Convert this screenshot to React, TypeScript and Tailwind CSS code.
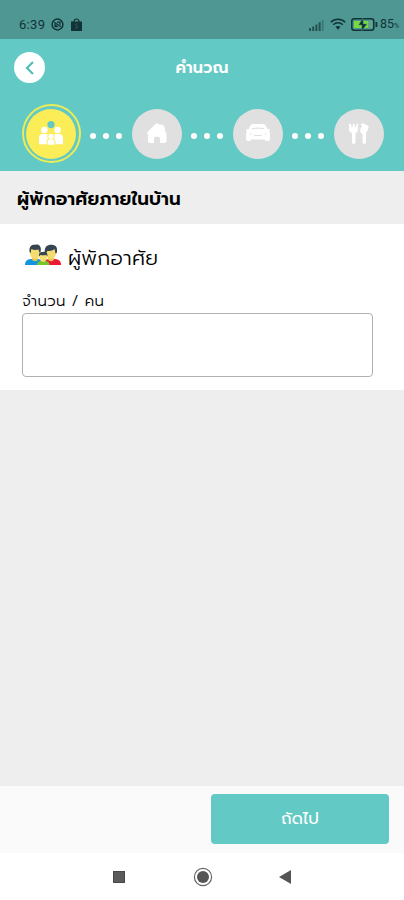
import React from "react";

const Dots = () => (
  <div className="flex w-[51px] justify-center gap-[7px] pt-[4px]">
    <span className="h-[6px] w-[6px] rounded-full bg-white" />
    <span className="h-[6px] w-[6px] rounded-full bg-white" />
    <span className="h-[6px] w-[6px] rounded-full bg-white" />
  </div>
);

const Step = ({ children }: { children: React.ReactNode }) => (
  <div className="flex h-[50px] w-[50px] items-center justify-center rounded-full bg-[#e0e0e0]">
    {children}
  </div>
);

const StatusBar = () => (
  <div className="flex h-[39px] items-end justify-between bg-[#4e9792] pb-[6px] pl-[19px] text-[#123336]">
    <div className="flex h-[17px] items-center">
      <span className="w-[32px] font-[Roboto] text-[13px] tracking-[0.3px]">6:39</span>
      <svg width="13" height="13" viewBox="0 0 13 13" fill="none" stroke="currentColor">
        <circle cx="6.5" cy="6.5" r="5.4" strokeWidth="1.5" />
        <path d="M3.2 4.2 9.8 8.8M4 8.7V6.8l2 1.9H4M6 4.2h3v2.6" strokeWidth="1.3" />
      </svg>
      <svg className="ml-[7px]" width="11" height="13" viewBox="0 0 11 13">
        <path d="M3 4C3 0 8 0 8 4" fill="none" stroke="currentColor" strokeWidth="1.2" />
        <path d="M0 3.5h11V13H0z" fill="currentColor" />
        <path d="M6.8 6.2c-3-1-3 1.2-1.2 1.8 2.3.7 1 3-1.6 1.7" fill="none" stroke="#2c5c5b" />
      </svg>
    </div>
    <div className="flex h-[17px] items-center overflow-hidden pr-[4px]">
      <svg width="15" height="12" viewBox="0 0 15 12" fill="#245250">
        <path d="M0 9h2v3H0zM3.2 7.5h2V12h-2zM6.4 5.5h2V12h-2zM9.6 3.2h2V12h-2z" />
        <path d="M12.8 1h1.8v11h-1.8z" opacity=".45" />
      </svg>
      <svg className="ml-[6px]" width="16" height="13" viewBox="0 0 16 13" fill="none" stroke="currentColor">
        <path d="M.8 4.2C4.8.2 11.2.2 15.2 4.2" strokeWidth="1.4" />
        <path d="M3.2 6.8c2.7-2.6 6.9-2.6 9.6 0" strokeWidth="1.5" />
        <path d="m5.5 8.8 2.5 3 2.5-3c-1.4-1.2-3.6-1.2-5 0Z" fill="currentColor" stroke="none" />
      </svg>
      <svg className="ml-[5px]" width="27" height="13" viewBox="0 0 27 13">
        <rect x=".8" y=".8" width="22" height="11.4" rx="2.5" fill="none" stroke="currentColor" strokeWidth="1.5" />
        <path d="M3 3h14v7H3z" fill="#79d83b" />
        <path d="M17 3h4v7h-4z" fill="#64a58a" />
        <path d="M11.8.2 7.6 7h3.2v5.8L16 5.9h-3.6z" fill="currentColor" stroke="#4e9792" strokeWidth=".5" />
        <path d="M24.5 4h1.8v5h-1.8z" fill="currentColor" />
      </svg>
      <span className="ml-[2px] font-[Roboto] text-[12.5px]">85</span>
      <span className="w-[6px] pt-[4px] font-[Roboto] text-[7px]">%</span>
    </div>
  </div>
);

const FamilyIcon = () => (
  <svg width="24" height="25" viewBox="0 0 24 25" fill="#fff">
    <circle cx="12" cy="3.6" r="3.6" fill="#62c9c5" />
    <circle cx="5.4" cy="9" r="3.2" />
    <circle cx="18.6" cy="9" r="3.2" />
    <path d="M0 16.5C0 14 1.5 13 4 13h3c1 0 1.5.4 1.7 1-.8 1.5-.3 3 .6 3.8-1.2.6-1.8 1.6-1.8 3.2v2.2H0zM24 16.5c0-2.5-1.5-3.5-4-3.5h-3c-1 0-1.5.4-1.7 1 .8 1.5.3 3-.6 3.8 1.2.6 1.8 1.6 1.8 3.2v2.2H24z" />
    <circle cx="12" cy="15.3" r="2.6" />
    <path d="M8.5 21c0-2 1-2.8 2.4-2.8h2.2c1.4 0 2.4.8 2.4 2.8v2.8h-7z" />
  </svg>
);

const PeopleIcon = () => (
  <svg width="36" height="22" viewBox="0 0 36 22">
    <path d="M0 21c0-4 2-5.5 6-6h7c4 .5 5 3 5 6z" fill="#1494dc" />
    <path d="M18 21c0-4 2-5.5 6-6h6c4 .5 6 2 6 6z" fill="#ed1834" />
    <path d="M7 13h6v2.5c-1 2.2-5 2.2-6 0zM23 13h6v2.5c-1 2.2-5 2.2-6 0z" fill="#e7c64f" />
    <ellipse cx="10" cy="9" rx="5" ry="6" fill="#f6dc70" />
    <ellipse cx="26" cy="9" rx="5" ry="6" fill="#f6dc70" />
    <path d="M4.5 8C4 3 6 .5 10 .8c4-1.3 7 2 5.5 7.2l-1.2.5-.8-3c-3 .8-5.5.3-7.2-.5L5.7 9z" fill="#354652" />
    <path d="M20 9C18.8 4 22 .3 26 .8 31 .3 33 4 31.8 9l-1.3.5-1-4.5c-2.5 2-5 2-7.2 2L21 10z" fill="#354652" />
    <path d="M12 21c0-2.5 2-4 4-4h4.5c2.5 0 4 1.5 4 4z" fill="#78c52b" />
    <ellipse cx="18.2" cy="13.2" rx="3.8" ry="4.8" fill="#f6dc70" />
    <path d="M14 12.5C13.5 9 15 7.5 18 8c3-.7 5 1.2 4.3 4.5l-1-1.5c-2.5.6-4.5.3-6 0z" fill="#354652" />
  </svg>
);

export default function App() {
  return (
    <div className="flex h-[900px] w-[404px] flex-col overflow-hidden bg-[#eeeeee] font-['Prompt','Kanit','Noto_Sans_Thai','Noto_Sans',sans-serif]">
      <StatusBar />

      {/* Header */}
      <header className="h-[132px] bg-[#62c9c5]">
        <div className="flex items-center px-[14px] pt-[13px]">
          <button className="flex h-[31px] w-[31px] items-center justify-center rounded-full bg-white">
            <svg width="10" height="14" viewBox="0 0 10 14" fill="none" stroke="#56bdb8" strokeWidth="2.3">
              <path d="M8 1 2 7l6 6" />
            </svg>
          </button>
          <h1 className="flex-1 pt-[2px] pr-[31px] text-center text-[16px] leading-[29px] font-semibold tracking-[0.2px] text-white">คำนวณ</h1>
        </div>

        {/* Steps */}
        <div className="mt-[21px] flex h-[59px] items-center pl-[21.5px]">
          <div className="flex h-[59px] w-[59px] items-center justify-center rounded-full border-2 border-[#eced56]">
            <div className="flex h-[50px] w-[50px] items-center justify-center rounded-full bg-[#faed57]">
              <FamilyIcon />
            </div>
          </div>
          <Dots />
          <Step>
            <svg className="mb-[2px]" width="20" height="20" viewBox="0 0 20 20" fill="#fff">
              <path d="M0 9.5 8.5 1q1.5-1.4 3 0l1 .8Q15 .8 16.5 2.5L18 5v3l1.5 2.5V18q0 2-2 2H13v-4.5q0-2-3-2t-3 2V20H3q-2 0-2-2v-6.5z" />
            </svg>
          </Step>
          <Dots />
          <Step>
            <svg className="mb-[2px]" width="24" height="17" viewBox="0 0 24 17" fill="#fff">
              <path d="M7 0h10q2 0 2.8 1.7L21.5 5H23q1 0 1 1l-1 1q1 1.2 1 3v5q0 2-2 2h-1.5q-1.5 0-1.5-1.5H5Q5 17 3.500 17H2q-2 0-2-2v-5q0-2 1-3L0 6.500q0-1.200 1-1.300h1.500L4.200 2Q5 0 7 0z" />
              <path d="M5.500 5.300Q12 4.300 18.500 5.300l-.6-1.300Q12 3.200 6.100 4zM8 11h8v1H8zM3.500 9.300l3 1.200h-3zM20.500 9.300l-3 1.200h3z" fill="#e0e0e0" />
            </svg>
          </Step>
          <Dots />
          <Step>
            <svg width="20" height="21" viewBox="0 0 20 21" fill="#fff">
              <path d="M0 1Q1 0 2 1l.5 3h1L4 1q.7-1 1.5 0L6 4h1l.5-3q.7-1 1.5 0v5q0 3-2.5 4v9q0 2-1.800 2T3 19v-9Q0 9 0 6z" />
              <path d="M12 1q3-2 5 1 3 0 2.500 3-.5 3-2.500 4v10q0 2-1.700 2t-1.800-2v-8q-2.700-1-2.300-4 .2-3 1.800-3z" />
            </svg>
          </Step>
        </div>
      </header>

      <h2 className="h-[53px] pl-[17px] text-[18.3px] leading-[56px] font-semibold tracking-[0.15px] text-black">ผู้พักอาศัยภายในบ้าน</h2>

      <section className="h-[166px] bg-white px-[22px] pt-[20px]">
        <div className="flex h-[28px] items-start pl-[3px]">
          <PeopleIcon />
          <span className="ml-[7px] pt-[2px] text-[20.5px] leading-[26px] font-light tracking-[0.25px] text-black">ผู้พักอาศัย</span>
        </div>
        <label className="mt-[17px] block h-[24px] text-[15px] leading-[25px] font-light tracking-[0.3px] text-black">จำนวน / คน</label>
        <input className="block h-[64px] w-[351px] rounded-[4px] border border-[#b0b0b0] bg-white px-3 outline-none" />
      </section>

      <main className="flex-1" />

      <footer className="flex h-[67px] justify-end bg-[#fafafa] pt-[8px] pr-[15px]">
        <button className="h-[50px] w-[178px] rounded-[4px] bg-[#62c9c5] text-[16.5px] text-white">ถัดไป</button>
      </footer>

      {/* Android navigation */}
      <nav className="flex h-[47px] items-center bg-white pl-[113px]">
        <span className="h-[12px] w-[12px] border border-[#484848] bg-[#5b5b5b]" />
        <svg className="ml-[68px]" width="20" height="20" viewBox="0 0 20 20">
          <circle cx="10" cy="10" r="8.6" fill="none" stroke="#666" strokeWidth="1.2" />
          <circle cx="10" cy="10" r="6" fill="#555" />
        </svg>
        <svg className="ml-[66px]" width="13" height="14" viewBox="0 0 13 14">
          <path d="M0 7 12 0v14z" fill="#555" />
        </svg>
      </nav>
    </div>
  );
}
